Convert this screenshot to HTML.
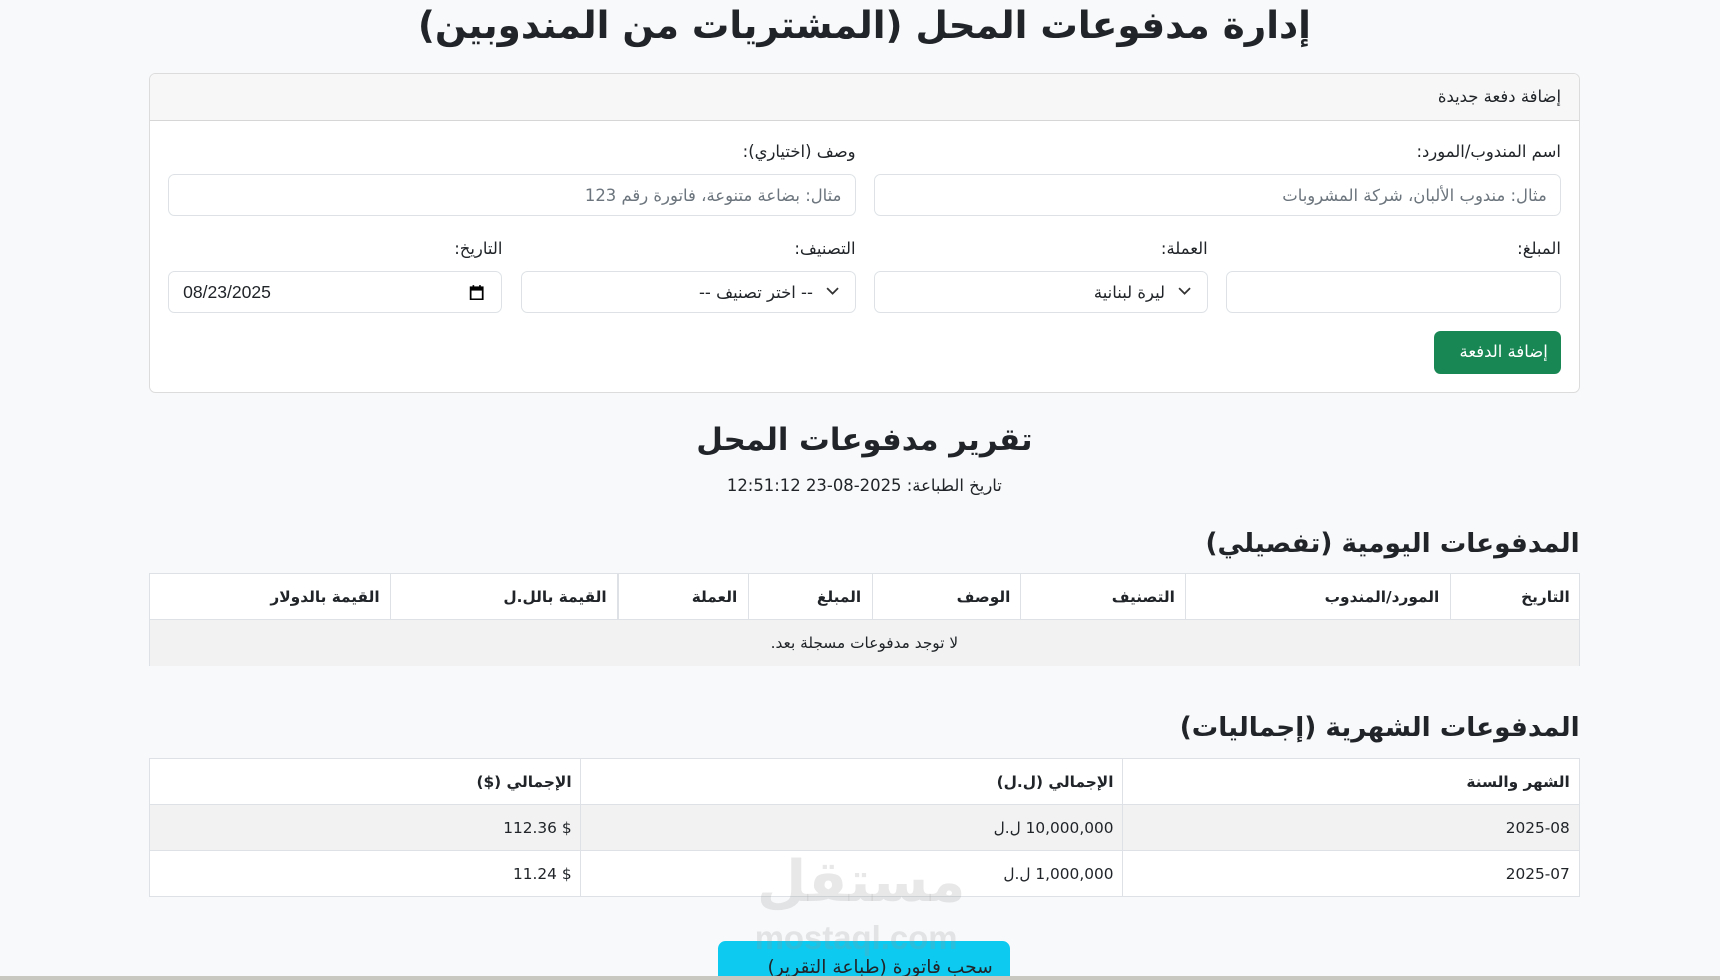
<!DOCTYPE html>
<html dir="rtl"><head><meta charset="utf-8">
<style>
html{zoom:1.09694}
*{box-sizing:border-box;margin:0;padding:0}
body{width:1568px;height:893px;overflow:hidden;background:#f8f9fa;font-family:"DejaVu Sans","Noto Sans CJK SC",sans-serif;color:#212529;position:relative;font-size:15px}
.a{position:absolute}
.t{white-space:nowrap}
h1{position:absolute;left:0;width:1576px;text-align:center;top:1px;font-size:34px;font-weight:bold;line-height:44px}
.card{left:136px;top:67px;width:1304px;height:291px;border:1px solid #dcdcdc;border-radius:6px;background:#fff;overflow:hidden}
.ch{position:absolute;left:0;top:0;right:0;height:42px;background:#f7f7f7;border-bottom:1px solid #d6d6d6}
.inp{position:absolute;height:38px;border:1px solid #dee2e6;border-radius:6px;background:#fff}
.ph{color:#6c757d}
.tbl{position:absolute;left:136px;width:1304px;border:1px solid #dee2e6;background:#fff}
.row{position:absolute;left:0;right:0;height:42px;border-bottom:1px solid #dee2e6}
.vl{position:absolute;top:0;bottom:0;width:1px;background:#dee2e6}
.th{font-weight:bold;font-size:14px}
</style></head><body>
<h1>إدارة مدفوعات المحل (المشتريات من المندوبين)</h1>
<div class="a card">
 <div class="ch"><span class="a t" style="right:16px;top:11px">إضافة دفعة جديدة</span></div>
</div>
<span class="a t" style="right:145px;top:129px">اسم المندوب/المورد:</span>
<span class="a t" style="right:788px;top:129px">وصف (اختياري):</span>
<div class="inp" style="left:797px;width:626px;top:159px"><span class="a t ph" style="right:12px;top:10px">مثال: مندوب الألبان، شركة المشروبات</span></div>
<div class="inp" style="left:153px;width:627px;top:159px"><span class="a t ph" style="right:12px;top:10px">مثال: بضاعة متنوعة، فاتورة رقم 123</span></div>
<span class="a t" style="right:145px;top:218px">المبلغ:</span>
<span class="a t" style="right:467px;top:218px">العملة:</span>
<span class="a t" style="right:788px;top:218px">التصنيف:</span>
<span class="a t" style="right:1110px;top:218px">التاريخ:</span>
<div class="inp" style="left:1118px;width:305px;top:247px"></div>
<div class="inp" style="left:797px;width:304px;top:247px"><span class="a t" style="right:38px;top:10px">ليرة لبنانية</span><svg class="a" style="right:14px;top:14px" width="12" height="8" viewBox="0 0 12 8"><path d="M1 1l5 5 5-5" fill="none" stroke="#333" stroke-width="1.6"/></svg></div>
<div class="inp" style="left:475px;width:305px;top:247px"><span class="a t" style="right:38px;top:10px">-- اختر تصنيف --</span><svg class="a" style="right:14px;top:14px" width="12" height="8" viewBox="0 0 12 8"><path d="M1 1l5 5 5-5" fill="none" stroke="#333" stroke-width="1.6"/></svg></div>
<div class="inp" style="left:153px;width:305px;top:247px"><span class="a t" style="left:13px;top:9px;font-family:'Liberation Sans',sans-serif;font-size:16px">08/23/2025</span><svg class="a" style="left:274px;top:11px" width="14" height="15" viewBox="0 0 14 15"><rect x="1.5" y="3" width="11" height="11" fill="none" stroke="#000" stroke-width="1.6"/><rect x="1.5" y="3" width="11" height="3" fill="#000"/><path d="M4 1v3M10 1v3" stroke="#000" stroke-width="1.5"/></svg></div>
<div class="a" style="left:1307px;top:302px;width:116px;height:39px;background:#198754;border-radius:6px;color:#fff"><span class="a t" style="right:12px;top:10px">إضافة الدفعة</span></div>

<div class="a t" style="left:0;width:1576px;text-align:center;top:385px;font-size:28px;font-weight:bold">تقرير مدفوعات المحل</div>
<div class="a t" style="left:0;width:1576px;text-align:center;top:434px;font-size:15px">تاريخ الطباعة: 2025-08-23 12:51:12</div>

<div class="a t" style="right:128px;top:482px;font-size:24px;font-weight:bold">المدفوعات اليومية (تفصيلي)</div>
<div class="tbl" style="top:522px;height:85px">
 <div class="row" style="top:0"></div>
 <div class="row" style="top:42px;background:#f2f2f2;border-bottom:0"></div>
 <div class="vl" style="left:1185px;bottom:42px"></div><div class="vl" style="left:793px;bottom:42px"></div><div class="vl" style="left:658px;bottom:42px"></div><div class="vl" style="left:545px;bottom:42px"></div><div class="vl" style="left:426px;bottom:42px"></div><div class="vl" style="left:219px;bottom:42px"></div><div class="vl" style="left:943px;bottom:42px"></div>
 <span class="a t th" style="right:8px;top:13px">التاريخ</span>
 <span class="a t th" style="right:127px;top:13px">المورد/المندوب</span>
 <span class="a t th" style="right:368px;top:13px">التصنيف</span>
 <span class="a t th" style="right:518px;top:13px">الوصف</span>
 <span class="a t th" style="right:654px;top:13px">المبلغ</span>
 <span class="a t th" style="right:767px;top:13px">العملة</span>
 <span class="a t th" style="right:886px;top:13px">القيمة بالل.ل</span>
 <span class="a t th" style="right:1093px;top:13px">القيمة بالدولار</span>
 <div class="a t" style="left:0;right:0;text-align:center;top:55px;font-size:14px">لا توجد مدفوعات مسجلة بعد.</div>
</div>

<div class="a t" style="right:128px;top:650px;font-size:24px;font-weight:bold">المدفوعات الشهرية (إجماليات)</div>
<div class="tbl" style="top:691px;height:127px;font-size:14px">
 <div class="row" style="top:0"></div>
 <div class="row" style="top:42px;background:#f2f2f2"></div>
 <div class="row" style="top:84px;border-bottom:0"></div>
 <div class="vl" style="left:886px"></div><div class="vl" style="left:392px"></div>
 <span class="a t th" style="right:8px;top:13px">الشهر والسنة</span>
 <span class="a t th" style="right:424px;top:13px">الإجمالي (ل.ل)</span>
 <span class="a t th" style="right:918px;top:13px">الإجمالي ($)</span>
 <span class="a t" style="right:8px;top:55px">2025-08</span>
 <span class="a t" style="right:424px;top:55px">10,000,000 ل.ل</span>
 <span class="a t" style="right:918px;top:55px">$ 112.36</span>
 <span class="a t" style="right:8px;top:97px">2025-07</span>
 <span class="a t" style="right:424px;top:97px">1,000,000 ل.ل</span>
 <span class="a t" style="right:918px;top:97px">$ 11.24</span>
</div>

<div class="a" style="left:655px;top:858px;width:266px;height:32px;background:#0dcaf0;border-radius:7px 7px 0 0;overflow:hidden"><span class="a t" style="right:16px;top:14px;font-size:17px">سحب فاتورة (طباعة التقرير)</span></div>
<div class="a t" style="left:690px;top:775px;font-size:52px;font-weight:bold;color:rgba(150,150,150,.22);line-height:60px">مستقل</div>
<div class="a t" style="left:688px;top:838px;font-size:30px;font-weight:bold;color:rgba(150,150,150,.22);font-family:'Liberation Sans',sans-serif">mostaql.com</div>
<div class="a" style="left:0;top:890px;width:1568px;height:3px;background:#c8c8c0"></div>
</body></html>
